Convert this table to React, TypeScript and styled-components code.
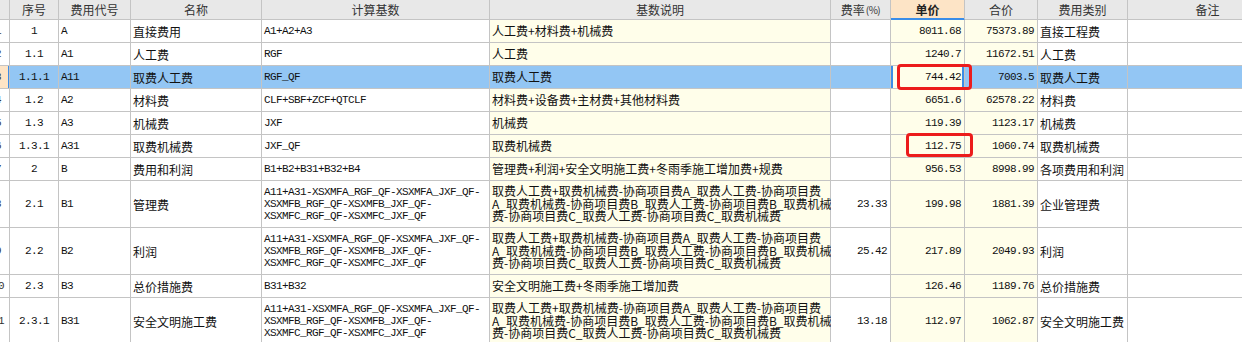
import styled, { createGlobalStyle, css } from 'styled-components'

const GlobalStyle = createGlobalStyle`
  html, body {
    margin: 0;
    padding: 0;
    background: #fff;
    overflow: hidden;
  }
  body {
    font-family: "Noto Sans CJK SC", "Liberation Sans", sans-serif;
    font-size: 12px;
    color: #111;
  }
`

const COLUMNS = '10px 49px 72px 131px 228px 341px 60px 74px 73px 90px 160px'
const GRID = '#c4c4c4'
const SELECTED = '#93c6f4'
const YELLOW = '#fffeea'
const FOCUS = '#3b8de8'

type Align = 'left' | 'center' | 'right'

interface IMark {
  left: number
  top: number
  width: number
  height: number
}

interface IRow {
  no: number
  seq: string
  code: string
  name: string
  base: string[]
  desc: string[]
  rate: string
  price: string
  total: string
  kind: string
  selected?: boolean
  mark?: IMark
}

const LONG_BASE = ['A11+A31-XSXMFA_RGF_QF-XSXMFA_JXF_QF-', 'XSXMFB_RGF_QF-XSXMFB_JXF_QF-', 'XSXMFC_RGF_QF-XSXMFC_JXF_QF']
const LONG_DESC = [
  '取费人工费+取费机械费-协商项目费A_取费人工费-协商项目费',
  'A_取费机械费-协商项目费B_取费人工费-协商项目费B_取费机械',
  '费-协商项目费C_取费人工费-协商项目费C_取费机械费',
]

const rows: IRow[] = [
  { no: 1, seq: '1', code: 'A', name: '直接费用', base: ['A1+A2+A3'], desc: ['人工费+材料费+机械费'], rate: '', price: '8011.68', total: '75373.89', kind: '直接工程费' },
  { no: 2, seq: '1.1', code: 'A1', name: '人工费', base: ['RGF'], desc: ['人工费'], rate: '', price: '1240.7', total: '11672.51', kind: '人工费' },
  {
    no: 3, seq: '1.1.1', code: 'A11', name: '取费人工费', base: ['RGF_QF'], desc: ['取费人工费'], rate: '', price: '744.42', total: '7003.5', kind: '取费人工费',
    selected: true, mark: { left: 6, top: -2, width: 75, height: 26 },
  },
  { no: 4, seq: '1.2', code: 'A2', name: '材料费', base: ['CLF+SBF+ZCF+QTCLF'], desc: ['材料费+设备费+主材费+其他材料费'], rate: '', price: '6651.6', total: '62578.22', kind: '材料费' },
  { no: 5, seq: '1.3', code: 'A3', name: '机械费', base: ['JXF'], desc: ['机械费'], rate: '', price: '119.39', total: '1123.17', kind: '机械费' },
  {
    no: 6, seq: '1.3.1', code: 'A31', name: '取费机械费', base: ['JXF_QF'], desc: ['取费机械费'], rate: '', price: '112.75', total: '1060.74', kind: '取费机械费',
    mark: { left: 15, top: -2, width: 67, height: 24 },
  },
  { no: 7, seq: '2', code: 'B', name: '费用和利润', base: ['B1+B2+B31+B32+B4'], desc: ['管理费+利润+安全文明施工费+冬雨季施工增加费+规费'], rate: '', price: '956.53', total: '8998.99', kind: '各项费用和利润' },
  { no: 8, seq: '2.1', code: 'B1', name: '管理费', base: LONG_BASE, desc: LONG_DESC, rate: '23.33', price: '199.98', total: '1881.39', kind: '企业管理费' },
  { no: 9, seq: '2.2', code: 'B2', name: '利润', base: LONG_BASE, desc: LONG_DESC, rate: '25.42', price: '217.89', total: '2049.93', kind: '利润' },
  { no: 10, seq: '2.3', code: 'B3', name: '总价措施费', base: ['B31+B32'], desc: ['安全文明施工费+冬雨季施工增加费'], rate: '', price: '126.46', total: '1189.76', kind: '总价措施费' },
  { no: 11, seq: '2.3.1', code: 'B31', name: '安全文明施工费', base: LONG_BASE, desc: LONG_DESC, rate: '13.18', price: '112.97', total: '1062.87', kind: '安全文明施工费' },
]

const App = () => {
  return (
    <>
      <GlobalStyle />
      <Sheet>
        <Row $height={20}>
          <RowHead $header />
          <HeadCell>序号</HeadCell>
          <HeadCell>费用代号</HeadCell>
          <HeadCell>名称</HeadCell>
          <HeadCell>计算基数</HeadCell>
          <HeadCell>基数说明</HeadCell>
          <HeadCell>
            费率<Small>(%)</Small>
          </HeadCell>
          <HeadCell $active>单价</HeadCell>
          <HeadCell>合价</HeadCell>
          <HeadCell>费用类别</HeadCell>
          <HeadCell>备注</HeadCell>
        </Row>
        {rows.map((r) => {
          const tall = r.base.length > 1
          const sel = !!r.selected
          return (
            <Row key={r.no} $height={tall ? 47 : 23}>
              <RowHead $selected={sel}>
                <RowNo>{r.no}</RowNo>
              </RowHead>
              <Cell $align='center' $mono $selected={sel}>{r.seq}</Cell>
              <Cell $mono $selected={sel}>{r.code}</Cell>
              <Cell $selected={sel}>{r.name}</Cell>
              <Cell $mono $selected={sel}>
                <Lines $mono>
                  {r.base.map((l) => (
                    <div key={l}>{l}</div>
                  ))}
                </Lines>
              </Cell>
              <Cell $yellow $selected={sel}>
                <Lines>
                  {r.desc.map((l) => (
                    <div key={l}>{l}</div>
                  ))}
                </Lines>
              </Cell>
              <Cell $align='right' $mono $selected={sel}>{r.rate}</Cell>
              <Cell $align='right' $mono $yellow $selected={sel} $focus={sel}>
                {r.price}
                {r.mark && <Mark $left={r.mark.left} $top={r.mark.top} $w={r.mark.width} $h={r.mark.height} />}
              </Cell>
              <Cell $align='right' $mono $yellow $selected={sel}>{r.total}</Cell>
              <Cell $selected={sel}>{r.kind}</Cell>
              <Cell $selected={sel} />
            </Row>
          )
        })}
      </Sheet>
    </>
  )
}

export default App

const Sheet = styled.div`
  width: 1242px;
  height: 342px;
  overflow: hidden;
  background: #fff;
`

const Row = styled.div<{ $height: number }>`
  display: grid;
  grid-template-columns: ${COLUMNS};
  height: ${(p) => p.$height}px;
`

const baseCell = css`
  box-sizing: border-box;
  border-right: 1px solid ${GRID};
  border-bottom: 1px solid ${GRID};
  display: flex;
  align-items: center;
  white-space: nowrap;
  min-width: 0;
`

const HeadCell = styled.div<{ $active?: boolean }>`
  ${baseCell};
  justify-content: center;
  background: #e8e8e8;
  color: #333;
  font-size: 12px;
  overflow: hidden;

  ${(p) =>
    p.$active &&
    css`
      background: #fde4c6;
      font-weight: 700;
      color: #222;
      border-bottom: 1px solid ${FOCUS};
      box-shadow: inset 0 -1px 0 ${FOCUS};
    `}
`

const Small = styled.span`
  font-size: 10px;
  letter-spacing: -0.5px;
  margin-left: 1px;
`

const RowHead = styled.div<{ $header?: boolean; $selected?: boolean }>`
  ${baseCell};
  overflow: hidden;
  color: #333;
  background: ${(p) => (p.$header ? '#e8e8e8' : p.$selected ? '#fde4c6' : '#fff')};
  box-shadow: ${(p) => (p.$selected ? `inset -1px 0 0 ${FOCUS}` : 'none')};
`

const RowNo = styled.span`
  display: block;
  flex-shrink: 0;
  width: 22px;
  margin-left: -13px;
  text-align: center;
  font-family: "Liberation Mono", monospace;
  font-size: 11px;
  letter-spacing: -0.6px;
`

const Cell = styled.div<{
  $align?: Align
  $mono?: boolean
  $yellow?: boolean
  $selected?: boolean
  $focus?: boolean
}>`
  ${baseCell};
  position: relative;
  padding: 0 ${(p) => (p.$align === 'right' ? 3 : 2)}px 0 2px;
  justify-content: ${(p) => (p.$align === 'right' ? 'flex-end' : p.$align === 'center' ? 'center' : 'flex-start')};
  background: ${(p) => (p.$focus ? YELLOW : p.$selected ? SELECTED : p.$yellow ? YELLOW : '#fff')};
  color: #111;
  font-size: 12px;

  ${(p) =>
    p.$mono &&
    css`
      font-family: "Liberation Mono", monospace;
      font-size: 11px;
      letter-spacing: -0.6px;
    `}

  ${(p) =>
    p.$focus &&
    css`
      box-shadow: inset 2px 0 0 ${FOCUS}, inset -2px 0 0 ${FOCUS};
    `}
`

const Lines = styled.div<{ $mono?: boolean }>`
  line-height: ${(p) => (p.$mono ? 12 : 12.5)}px;
`

const Mark = styled.div<{ $left: number; $top: number; $w: number; $h: number }>`
  position: absolute;
  left: ${(p) => p.$left}px;
  top: ${(p) => p.$top}px;
  width: ${(p) => p.$w}px;
  height: ${(p) => p.$h}px;
  box-sizing: border-box;
  border: 3px solid #ec1c1c;
  border-radius: 4px;
  pointer-events: none;
  z-index: 2;
`
